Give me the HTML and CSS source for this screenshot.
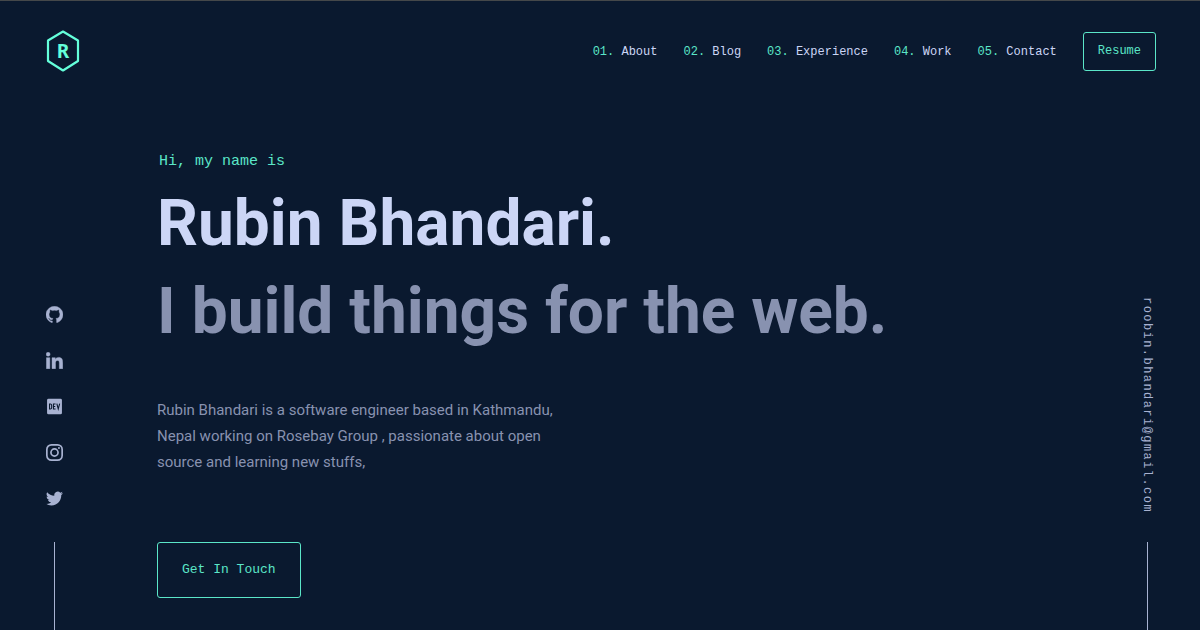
FILE: index.html
```html
<!DOCTYPE html>
<html lang="en">
<head>
<meta charset="utf-8">
<meta name="viewport" content="width=device-width, initial-scale=1">
<title>Rubin Bhandari</title>
<link rel="stylesheet" href="styles.css">
</head>
<body>
<header class="header">
  <a class="logo" href="#" aria-label="Home">
    <svg viewBox="0 0 34 42" width="34" height="42">
      <path d="M17 1.5 32 10.5V31L17 40.5 2 31V10.5Z" fill="none" stroke="currentColor" stroke-width="2.2" stroke-linejoin="round"/>
      <text class="logo-letter" x="17" y="28" text-anchor="middle">R</text>
    </svg>
  </a>
  <nav class="nav">
    <ol class="nav-list">
      <li><a href="#about"><span class="num">01.</span> About</a></li>
      <li><a href="#blog"><span class="num">02.</span> Blog</a></li>
      <li><a href="#experience"><span class="num">03.</span> Experience</a></li>
      <li><a href="#work"><span class="num">04.</span> Work</a></li>
      <li><a href="#contact"><span class="num">05.</span> Contact</a></li>
    </ol>
    <a class="button resume" href="#resume">Resume</a>
  </nav>
</header>
<div class="page">
  <aside class="side">
    <ul class="social">
      <li><a href="#github" aria-label="GitHub"><svg viewBox="0 0 24 24"><path fill="currentColor" stroke="currentColor" stroke-width=".5" d="M12 .3a12 12 0 0 0-3.8 23.38c.6.12.83-.26.83-.57L9 21.07c-3.34.72-4.04-1.61-4.04-1.61-.55-1.39-1.34-1.76-1.34-1.76-1.08-.74.09-.73.09-.73 1.2.09 1.83 1.24 1.83 1.24 1.08 1.83 2.81 1.3 3.5 1 .1-.78.42-1.31.76-1.61-2.67-.3-5.47-1.33-5.47-5.93 0-1.31.47-2.38 1.24-3.22-.14-.3-.54-1.52.1-3.18 0 0 1-.32 3.3 1.23a11.5 11.5 0 0 1 6 0c2.28-1.55 3.29-1.23 3.29-1.23.64 1.66.24 2.88.12 3.18a4.65 4.65 0 0 1 1.23 3.22c0 4.61-2.8 5.63-5.48 5.92.42.36.81 1.1.81 2.22l-.01 3.29c0 .31.2.69.82.57A12 12 0 0 0 12 .3"/></svg></a></li>
      <li><a href="#linkedin" aria-label="LinkedIn"><svg viewBox="0 0 24 24"><path fill="currentColor" stroke="currentColor" stroke-width=".6" d="M.6 8h4.8v15.5H.6zM3 .4a2.8 2.8 0 1 1 0 5.6 2.8 2.8 0 0 1 0-5.6zM8.5 8h4.6v2.1h.1c.7-1.2 2.2-2.5 4.6-2.5 4.9 0 5.8 3.2 5.8 7.4v8.5h-4.8V16c0-1.8 0-4.1-2.5-4.1s-2.9 2-2.9 4v7.6H8.5z"/></svg></a></li>
      <li><a href="#dev" aria-label="DEV"><svg viewBox="0 0 24 24"><rect x="1.5" y="1" width="21" height="22" rx="2" fill="currentColor"/><path class="dev-mark" d="M5 8.5v7h1.2q1.8 0 1.8-2v-3q0-2-1.8-2zM13.5 8.5h-3v7h3M10.5 12h2.5M15.3 8l2 7.5 2-7.500"/></svg></a></li>
      <li><a href="#instagram" aria-label="Instagram"><svg viewBox="0 0 24 24"><rect x="1.2" y="1.2" width="21.6" height="21.6" rx="6.5" fill="none" stroke="currentColor" stroke-width="2.4"/><circle cx="12" cy="12" r="5" fill="none" stroke="currentColor" stroke-width="2.4"/><circle cx="18.3" cy="5.7" r="1.4" fill="currentColor"/></svg></a></li>
      <li><a href="#twitter" aria-label="Twitter"><svg viewBox="0 0 24 24"><path fill="currentColor" d="M23.95 4.57a10 10 0 0 1-2.82.77 4.96 4.96 0 0 0 2.16-2.72c-.95.55-2 .95-3.13 1.18a4.92 4.92 0 0 0-8.38 4.48A13.93 13.93 0 0 1 1.64 3.16a4.92 4.92 0 0 0 1.52 6.57 4.9 4.9 0 0 1-2.23-.61v.06a4.92 4.92 0 0 0 3.95 4.83 5 5 0 0 1-2.21.08 4.94 4.94 0 0 0 4.6 3.42A9.87 9.87 0 0 1 0 19.54a14 14 0 0 0 7.55 2.21c9.05 0 14-7.5 14-13.98 0-.21 0-.42-.02-.63a9.94 9.94 0 0 0 2.46-2.55z"/></svg></a></li>
    </ul>
    <span class="line"></span>
  </aside>
  <main class="hero">
    <p class="greeting">Hi, my name is</p>
    <h1 class="title">Rubin Bhandari.</h1>
    <h2 class="title subtitle">I build things for the web.</h2>
    <p class="about">Rubin Bhandari is a software engineer based in Kathmandu, Nepal working on Rosebay Group , passionate about open source and learning new stuffs,</p>
    <a class="button contact" href="#contact">Get In Touch</a>
  </main>
  <aside class="side side-right">
    <a class="email" href="#email">roobin.bhandari@gmail.com</a>
    <span class="line"></span>
  </aside>
</div>
</body>
</html>
```
FILE: styles.css
```css
* { box-sizing: border-box; }

body {
  display: flex;
  flex-direction: column;
  min-height: 100vh;
  margin: 0;
  border-top: 1px solid #45484a;
  background: #0a192f;
  color: #8892b0;
  font-family: Roboto, sans-serif;
}

h1, h2, p, ol, ul { margin: 0; padding: 0; }
ol, ul { list-style: none; }
a { color: inherit; text-decoration: none; }

.header {
  display: flex;
  align-items: center;
  justify-content: space-between;
  height: 100px;
  padding: 0 44px 0 46px;
}

.logo { color: #64ffda; }
.logo svg { display: block; }
.logo-letter { fill: currentColor; font: bold 19px "Noto Sans", sans-serif; }

.nav, .nav-list { display: flex; align-items: center; gap: 26px; }
.nav {
  margin-top: 1px;
  color: #ccd6f6;
  font-family: "Liberation Mono", monospace;
  font-size: 12px;
}

.num, .greeting, .button { color: #5be6c8; }

.button {
  border: 1px solid #5be6c8;
  border-radius: 3px;
  font-family: "Liberation Mono", monospace;
}
.resume { padding: 12px 14px; line-height: 13px; }
.contact { margin-top: 67px; padding: 19px 24px; font-size: 13px; line-height: 16px; }

.page {
  display: grid;
  flex: 1;
  grid-template-columns: 108px 1fr 106px;
}

.side {
  display: flex;
  flex-direction: column;
  align-items: center;
  justify-content: flex-end;
  gap: 35px;
  color: #a8b2d1;
}
.side-right { gap: 29px; }
.social { display: grid; gap: 29px; }
.social svg { display: block; width: 17px; height: 17px; }
.dev-mark { fill: none; stroke: #0a192f; stroke-width: 1.5; }
.line { width: 1px; height: 88px; background: #a8b2d1; }
.email {
  writing-mode: vertical-rl;
  font-family: "Liberation Mono", monospace;
  font-size: 12px;
  letter-spacing: 0.12em;
}

.hero {
  display: flex;
  flex-direction: column;
  align-items: flex-start;
  padding: 51px 49px 31px;
}
.greeting {
  padding-left: 2px;
  font-family: "Liberation Mono", monospace;
  font-size: 15px;
  line-height: 20px;
}
.title {
  margin-top: 8px;
  color: #ccd6f6;
  font-size: 64px;
  font-weight: 700;
  line-height: 88px;
}
.subtitle { margin-top: 0; color: #8892b0; }
.about { max-width: 420px; margin-top: 41px; font-size: 15px; line-height: 26px; }
```
